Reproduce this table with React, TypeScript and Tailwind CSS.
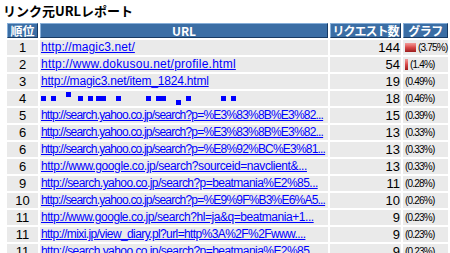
import React from 'react'

type Row = {
  rank: string
  url: string
  fit: string
  count: number
  pct: string
  bar?: { w: number; h: number }
}

// fit: letter-spacing that brings each link to the width it has in the original page
const rows: Row[] = [
  { rank: '1', url: 'http://magic3.net/', fit: 'tracking-[0.1px]', count: 144, pct: '(3.75%)', bar: { w: 11, h: 9 } },
  { rank: '2', url: 'http://www.dokusou.net/profile.html', fit: 'tracking-[0.25px]', count: 54, pct: '(1.4%)', bar: { w: 3, h: 11 } },
  { rank: '3', url: 'http://magic3.net/item_1824.html', fit: 'tracking-[-0.2px]', count: 19, pct: '(0.49%)' },
  { rank: '4', url: '', fit: '', count: 18, pct: '(0.46%)' },
  { rank: '5', url: 'http://search.yahoo.co.jp/search?p=%E3%83%8B%E3%82...', fit: 'tracking-[-0.8px]', count: 15, pct: '(0.39%)' },
  { rank: '6', url: 'http://search.yahoo.co.jp/search?p=%E3%83%8B%E3%82...', fit: 'tracking-[-0.8px]', count: 13, pct: '(0.33%)' },
  { rank: '6', url: 'http://search.yahoo.co.jp/search?p=%E8%92%BC%E3%81...', fit: 'tracking-[-0.8px]', count: 13, pct: '(0.33%)' },
  { rank: '6', url: 'http://www.google.co.jp/search?sourceid=navclient&...', fit: 'tracking-[-0.4px]', count: 13, pct: '(0.33%)' },
  { rank: '9', url: 'http://search.yahoo.co.jp/search?p=beatmania%E2%85...', fit: 'tracking-[-0.55px]', count: 11, pct: '(0.28%)' },
  { rank: '10', url: 'http://search.yahoo.co.jp/search?p=%E9%9F%B3%E6%A5...', fit: 'tracking-[-0.8px]', count: 10, pct: '(0.26%)' },
  { rank: '11', url: 'http://www.google.co.jp/search?hl=ja&q=beatmania+1...', fit: 'tracking-[-0.45px]', count: 9, pct: '(0.23%)' },
  { rank: '11', url: 'http://mixi.jp/view_diary.pl?url=http%3A%2F%2Fwww....', fit: 'tracking-[-0.6px]', count: 9, pct: '(0.23%)' },
  { rank: '11', url: 'http://search.yahoo.co.jp/search?p=beatmania%E2%85...', fit: 'tracking-[-0.55px]', count: 9, pct: '(0.23%)' },
]

// garbled characters shown as small boxes in row 4
const boxes = [
  { x: 0, y: 5, w: 5 },
  { x: 10, y: 5, w: 5 },
  { x: 25, y: 1, w: 5 },
  { x: 37, y: 5, w: 5 },
  { x: 47, y: 5, w: 5 },
  { x: 55, y: 5, w: 10 },
  { x: 75, y: 5, w: 5 },
  { x: 105, y: 5, w: 5 },
  { x: 115, y: 5, w: 10 },
  { x: 135, y: 9, w: 5 },
  { x: 145, y: 5, w: 5 },
  { x: 180, y: 5, w: 5 },
  { x: 190, y: 5, w: 5 },
]

const th =
  'h-[15px] p-0 bg-[#3b6ea5] text-white font-bold text-[12px] leading-[13px] border border-t-[#86aed8] border-l-[#86aed8] border-b-[#173a63] border-r-[#173a63]'

export default function App() {
  return (
    <div
      className="bg-white text-black"
      style={{ fontFamily: '"Liberation Sans", "Noto Sans CJK JP", sans-serif' }}
    >
      <div
        className="h-[21px] pl-[3px] pt-[2px] text-[13px] leading-[17px] font-bold"
        style={{ fontFamily: '"Noto Sans CJK JP", sans-serif' }}
      >
        リンク元URLレポート
      </div>
      <table className="ml-[5px] border-separate border-spacing-[2px] table-fixed w-[445px]">
        <colgroup>
          <col className="w-[31px]" />
          <col className="w-[288px]" />
          <col className="w-[71px]" />
          <col className="w-[45px]" />
        </colgroup>
        <thead>
          <tr style={{ fontFamily: '"Noto Sans CJK JP", sans-serif' }}>
            <th className={th}>順位</th>
            <th className={th}>URL</th>
            <th className={`${th} tracking-[-1px] whitespace-nowrap`}>リクエスト数</th>
            <th className={`${th} tracking-[-0.5px] whitespace-nowrap`}>グラフ</th>
          </tr>
        </thead>
        <tbody className="text-[12px] leading-[15px]">
          {rows.map((r, i) => (
            <tr key={i}>
              <td className="h-[15px] p-0 bg-[#eaeaea] text-center text-[13px]">{r.rank}</td>
              <td className="h-[15px] p-0 bg-[#eaeaea] whitespace-nowrap overflow-hidden">
                {r.url ? (
                  <a href="#" className={`text-[#0000ff] underline pl-[1px] ${r.fit}`}>
                    {r.url}
                  </a>
                ) : (
                  <svg width="200" height="15" className="block">
                    {boxes.map((b, j) => (
                      <rect key={j} x={b.x + 1} y={b.y} width={b.w} height={5} fill="#0000ff" />
                    ))}
                  </svg>
                )}
              </td>
              <td className="h-[15px] p-0 bg-[#eaeaea] text-right text-[13px] pr-[1px]">{r.count}</td>
              <td className="h-[15px] p-0 bg-[#eaeaea] whitespace-nowrap">
                <div className="flex items-center pl-[2px] gap-[2px]">
                  {r.bar && (
                    <span
                      className="block bg-gradient-to-b from-[#f29a9a] via-[#d84848] to-[#9c1c1c]"
                      style={{ width: r.bar.w, height: r.bar.h }}
                    />
                  )}
                  <span className="text-[10px] tracking-[-0.8px] leading-[15px]">{r.pct}</span>
                </div>
              </td>
            </tr>
          ))}
        </tbody>
      </table>
    </div>
  )
}
